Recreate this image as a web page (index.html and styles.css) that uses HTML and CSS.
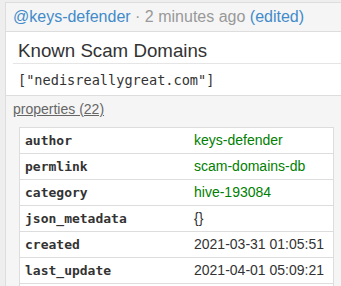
FILE: index.html
```html
<!DOCTYPE html>
<html lang="en">
<head>
    <meta charset="UTF-8">
    <meta name="viewport" content="width=device-width, initial-scale=1.0">
    <title>Known Scam Domains</title>
    <link rel="stylesheet" href="styles.css">
</head>
<body>
    <div class="card">
        <!-- Post header -->
        <div class="card-head">
            <a class="user" href="#">@keys-defender</a>
            <span class="meta">&middot; 2 minutes ago</span>
            <a class="edited" href="#">(edited)</a>
        </div>

        <div class="card-body">
            <h3 class="title">Known Scam Domains</h3>
            <pre class="json">["nedisreallygreat.com"]</pre>
        </div>

        <!-- Properties -->
        <div class="card-foot">
            <a class="props-toggle" href="#">properties (22)</a>
            <table class="props">
                <tr><td class="key">author</td><td class="val green">keys-defender</td></tr>
                <tr><td class="key">permlink</td><td class="val green">scam-domains-db</td></tr>
                <tr><td class="key">category</td><td class="val green">hive-193084</td></tr>
                <tr><td class="key">json_metadata</td><td class="val">{}</td></tr>
                <tr><td class="key">created</td><td class="val">2021-03-31 01:05:51</td></tr>
                <tr><td class="key">last_update</td><td class="val">2021-04-01 05:09:21</td></tr>
                <tr class="more"><td></td><td></td></tr>
            </table>
        </div>
    </div>
</body>
</html>
```

FILE: styles.css
```css
body {
    margin: 0;
    padding: 2px 0 0 5px;
    background: #eee;
    font-family: "Liberation Sans", Arial, sans-serif;
    color: #333;
    overflow: hidden;
}
a {
    text-decoration: none;
}
.card {
    margin-right: -8px;
    border: 1px solid #ddd;
    background: #fff;
}
.card-head {
    background: #f5f5f5;
    border-bottom: 1px solid #ddd;
    padding: 4px 7px;
    font-size: 16px;
    line-height: 20px;
    white-space: nowrap;
}
.card-head .user,
.card-head .edited {
    color: #428bca;
}
.card-head .meta {
    color: #999;
}
.card-body {
    padding: 4px 0 6px 7px;
}
.title {
    margin: 0;
    padding: 3px 5px 0;
    font-size: 18.72px;
    font-weight: normal;
    line-height: 24px;
    border-bottom: 1px solid #e5e5e5;
}
.json {
    margin: 7px 0 0;
    padding: 0 5px;
    font-family: "DejaVu Sans Mono", monospace;
    font-size: 13.6px;
    line-height: 18px;
}
.card-foot {
    background: #f5f5f5;
    border-top: 1px solid #ddd;
    padding: 3px 7px 0;
}
.props-toggle {
    display: inline-block;
    color: #666;
    text-decoration: underline;
    font-size: 14px;
    line-height: 20px;
}
.props {
    width: 315px;
    margin: 8px 0 0 6px;
    border-collapse: collapse;
    table-layout: fixed;
    background: #fff;
    border: 1px solid #ddd;
}
.props td {
    border-top: 1px solid #ddd;
    padding: 4px 5px;
    line-height: 17px;
    white-space: nowrap;
}
.props .more td {
    height: 17px;
}
.props .key {
    width: 159px;
    font-family: "DejaVu Sans Mono", monospace;
    font-size: 13px;
    font-weight: bold;
}
.props .val {
    font-size: 14px;
}
.props .green {
    color: #008000;
}
```
